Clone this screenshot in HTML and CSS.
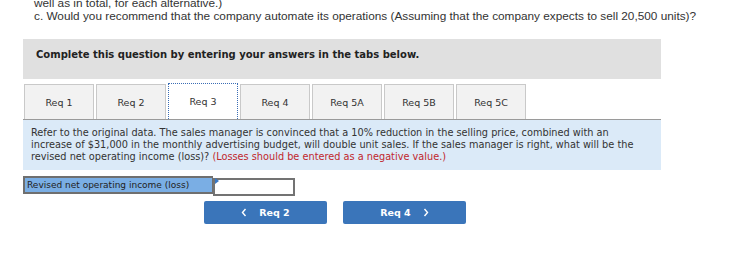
FILE: index.html
```html
<!DOCTYPE html>
<html lang="en">
<head>
    <meta charset="UTF-8">
    <title>Req 3</title>
    <link rel="stylesheet" href="styles.css">
</head>
<body>
    <!-- Question text, scrolled partly out of view -->
    <div class="intro">
        <p>well as in total, for each alternative.)</p>
        <p>c. Would you recommend that the company automate its operations (Assuming that the company expects to sell 20,500 units)?</p>
    </div>

    <div class="question">
        <div class="instructions">Complete this question by entering your answers in the tabs below.</div>

        <!-- Tabs -->
        <div class="tabs">
            <div class="tab">Req 1</div>
            <div class="tab">Req 2</div>
            <div class="tab active">Req 3</div>
            <div class="tab">Req 4</div>
            <div class="tab">Req 5A</div>
            <div class="tab">Req 5B</div>
            <div class="tab">Req 5C</div>
        </div>

        <div class="panel">
            Refer to the original data. The sales manager is convinced that a 10% reduction in the selling price, combined with an<br>
            increase of $31,000 in the monthly advertising budget, will double unit sales. If the sales manager is right, what will be the<br>
            revised net operating income (loss)? <span class="note">(Losses should be entered as a negative value.)</span>
        </div>

        <!-- Answer row -->
        <div class="answer">
            <label class="answer-label" for="income">Revised net operating income (loss)</label>
            <div class="answer-cell">
                <span class="marker"></span>
                <input type="text" id="income" class="answer-input">
            </div>
        </div>

        <div class="nav">
            <button class="nav-btn">
                <svg class="chevron" width="6" height="9" viewBox="0 0 6 9"><path d="M4.5 1 L1.5 4.5 L4.5 8" fill="none" stroke="#fff" stroke-width="1.4"/></svg>
                Req 2
            </button>
            <button class="nav-btn">
                Req 4
                <svg class="chevron" width="6" height="9" viewBox="0 0 6 9"><path d="M1.5 1 L4.5 4.5 L1.5 8" fill="none" stroke="#fff" stroke-width="1.4"/></svg>
            </button>
        </div>
    </div>
</body>
</html>
```

FILE: styles.css
```css
body {
    margin: 0;
    color: #333;
    background: #fff;
    font-family: "Liberation Sans", Arial, sans-serif;
}

/* Question text at the top */
.intro {
    margin-top: -3px;
    padding-left: 34px;
    font-size: 11.8px;
    line-height: 13px;
}

.intro p {
    margin: 0;
}

.question {
    width: 638px;
    margin: 16px 0 0 23px;
    font-family: "DejaVu Sans", Verdana, sans-serif;
}

/* Grey instruction bar */
.instructions {
    height: 40px;
    box-sizing: border-box;
    padding: 10px 13px;
    background-color: #e0e0e0;
    font-size: 10px;
    font-weight: bold;
    color: #222;
}

/* Tabs */
.tabs {
    display: flex;
    gap: 2px;
    margin-top: 5px;
    padding-left: 1px;
    border-bottom: 1px solid #9a9a9a;
}

.tab {
    width: 70px;
    height: 35px;
    box-sizing: border-box;
    border: 1px solid #c9c9c9;
    border-bottom: none;
    background-color: #f2f2f2;
    font-size: 9.5px;
    line-height: 36px;
    text-align: center;
    color: #333;
}

.tab.active {
    height: 36px;
    margin-top: -1px;
    border: 1px dotted #3a6db5;
    border-bottom: none;
    background-color: #fff;
}

/* Blue text panel */
.panel {
    padding: 7px 8px 7px;
    background-color: #dbeaf8;
    font-size: 9.75px;
    line-height: 12px;
    color: #333;
    white-space: nowrap;
}

.note {
    color: #c1272d;
}

/* Answer row */
.answer {
    display: flex;
    margin-top: 6px;
    height: 18px;
}

.answer-label {
    width: 190px;
    box-sizing: border-box;
    border: 2px solid #6f6f6f;
    border-right-width: 1px;
    padding-left: 2px;
    background-color: #7aaee4;
    font-size: 9px;
    line-height: 14px;
    color: #222;
}

.answer-cell {
    position: relative;
    width: 82px;
}

.answer-input {
    width: 100%;
    height: 18px;
    box-sizing: border-box;
    margin: 0;
    border: 2px solid #737373;
    padding: 0 3px;
    background: #fff;
}

.marker {
    position: absolute;
    top: 2px;
    left: 2px;
    width: 0;
    height: 0;
    border-top: 3px solid transparent;
    border-bottom: 3px solid transparent;
    border-left: 4px solid #3a78c3;
}

/* Previous / next buttons */
.nav {
    display: flex;
    gap: 16px;
    margin: 7px 0 0 181px;
}

.nav-btn {
    display: flex;
    align-items: center;
    justify-content: center;
    gap: 12px;
    width: 123px;
    height: 23px;
    border: none;
    border-radius: 2px;
    background-color: #3a75ba;
    color: #fff;
    font-family: "DejaVu Sans", Verdana, sans-serif;
    font-size: 9.5px;
    font-weight: bold;
}
```
